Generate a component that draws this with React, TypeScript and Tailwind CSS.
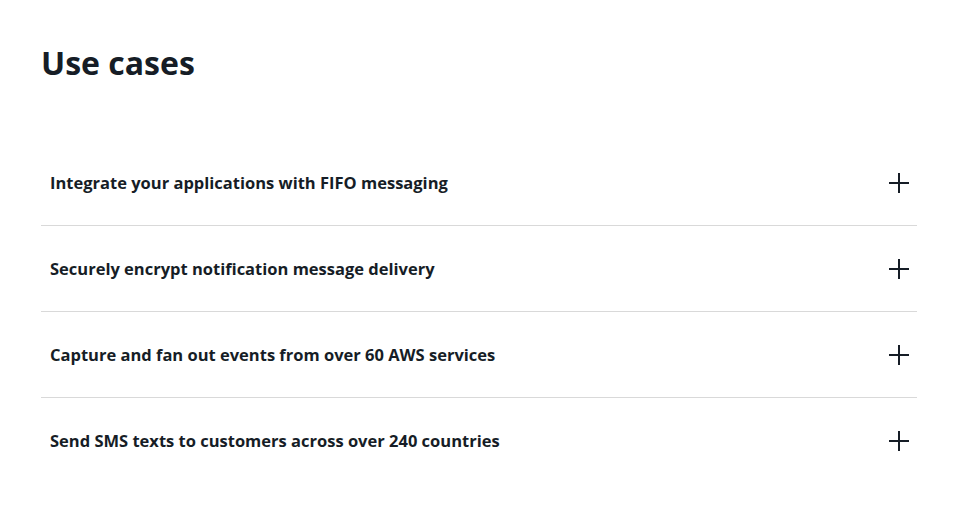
const useCases = [
  'Integrate your applications with FIFO messaging',
  'Securely encrypt notification message delivery',
  'Capture and fan out events from over 60 AWS services',
  'Send SMS texts to customers across over 240 countries',
];

function PlusIcon() {
  return (
    <svg width="20" height="20" viewBox="0 0 20 20" fill="none" stroke="currentColor" strokeWidth="2">
      <path d="M10 0v20M0 10h20" />
    </svg>
  );
}

export default function App() {
  return (
    <div className="min-h-screen bg-white px-[41px] pt-[43px] text-[#161d26] [font-family:'Open_Sans',sans-serif]">
      <h1 className="text-[32px] font-bold leading-[40px]">Use cases</h1>
      <ul className="mt-[57px] w-[876px]">
        {useCases.map((title, i) => (
          <li
            key={title}
            className={i < useCases.length - 1 ? 'border-b border-[#d9d9d9]' : ''}
          >
            <button className="flex h-[85px] w-full items-center justify-between pl-[9px] pr-[8px] text-left">
              <span className="text-[16.5px] font-bold leading-6">{title}</span>
              <PlusIcon />
            </button>
          </li>
        ))}
      </ul>
    </div>
  );
}
